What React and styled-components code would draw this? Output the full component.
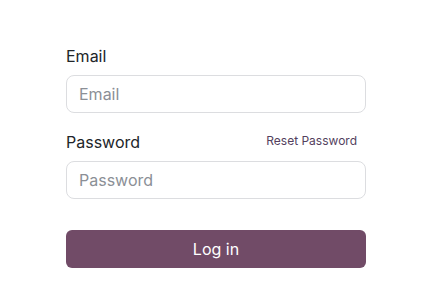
import React from 'react';
import styled, { createGlobalStyle } from 'styled-components';

const GlobalStyle = createGlobalStyle`
    body {
        margin: 0;
        background: #ffffff;
        font-family: Inter, "Noto Sans", sans-serif;
        color: #212529;
    }
`;

const Page = styled.div`
    display: flex;
    justify-content: center;
    padding-top: 44px;
`;

const Form = styled.form`
    width: 300px;
    display: flex;
    flex-direction: column;
`;

const Field = styled.div`
    display: flex;
    flex-direction: column;
    margin-bottom: ${({ last }) => (last ? '31px' : '17px')};
`;

const LabelRow = styled.div`
    display: flex;
    justify-content: space-between;
    align-items: center;
    margin-bottom: 7px;
`;

const Label = styled.label`
    font-size: 16px;
    line-height: 24px;
    color: #212529;
`;

const ResetLink = styled.a`
    font-size: 12px;
    line-height: 1.2;
    color: #543f5e;
    text-decoration: none;
    margin: 0 9px 1px 0;
`;

const Input = styled.input`
    box-sizing: border-box;
    width: 100%;
    height: 38px;
    padding: 0 12px;
    border: 1px solid #dcdde0;
    border-radius: 8px;
    font-family: inherit;
    font-size: 16px;
    color: #212529;
    outline: none;

    &::placeholder {
        color: #8b8f96;
    }
`;

const Button = styled.button`
    height: 38px;
    border: none;
    border-radius: 6px;
    background: #714b67;
    color: #ffffff;
    font-family: inherit;
    font-size: 16px;
    cursor: pointer;
`;

const App = () => (
    <>
        <GlobalStyle />
        <Page>
            <Form onSubmit={(e) => e.preventDefault()}>
                <Field>
                    <LabelRow>
                        <Label htmlFor="login">Email</Label>
                    </LabelRow>
                    <Input id="login" type="text" placeholder="Email" />
                </Field>
                <Field last>
                    <LabelRow>
                        <Label htmlFor="password">Password</Label>
                        <ResetLink href="#">Reset Password</ResetLink>
                    </LabelRow>
                    <Input id="password" type="password" placeholder="Password" />
                </Field>
                <Button type="submit">Log in</Button>
            </Form>
        </Page>
    </>
);

export default App;
